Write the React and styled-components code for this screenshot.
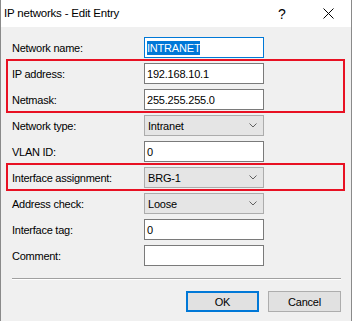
import React from 'react';
import styled, { createGlobalStyle } from 'styled-components'

const Global = createGlobalStyle`
    html, body {
        margin: 0;
        padding: 0;
        background: #f0f0f0;
    }
    body {
        font-family: "Liberation Sans", Arial, sans-serif;
        font-size: 11px;
        color: #000;
    }
`

const Window = styled.div`
    width: 352px;
    height: 321px;
    box-sizing: border-box;
    border-left: 1px solid #8a8a8a;
    border-right: 1px solid #8a8a8a;
    background: #f0f0f0;
    display: flex;
    flex-direction: column;
`

const TitleBar = styled.div`
    height: 27px;
    background: #fff;
    display: flex;
    align-items: center;
    padding-left: 3px;
    flex-shrink: 0;
`

const Title = styled.div`
    flex: 1;
    font-size: 11.5px;
    letter-spacing: -0.2px;
    padding-bottom: 1px;
`

const TitleButton = styled.div`
    width: 46px;
    height: 27px;
    display: flex;
    align-items: center;
    justify-content: center;
    font-size: 14px;
`

const Body = styled.div`
    flex: 1;
    padding: 10px 10px 0 11px;
    display: flex;
    flex-direction: column;
`

const Form = styled.div`
    display: flex;
    flex-direction: column;
    gap: 5px;
`

const Group = styled.div`
    display: flex;
    flex-direction: column;
    gap: 5px;
    margin: -4px -4px -3px -6px;
    padding: 2px 2px 1px 4px;
    border: 2px solid #e81123;
`

const Row = styled.div`
    display: grid;
    grid-template-columns: 132px 120px;
    align-items: center;
    height: 21px;
`

const Label = styled.div`
    letter-spacing: -0.25px;
    white-space: nowrap;
`

const TextBox = styled.div`
    box-sizing: border-box;
    height: 21px;
    border: 1px solid ${p => (p.$focused ? '#0078d7' : '#7a7a7a')};
    background: #fff;
    display: flex;
    align-items: center;
    padding-left: 2px;
    letter-spacing: -0.2px;
`

const Selected = styled.span`
    background: #0078d7;
    color: #fff;
    padding: 1px 0;
`

const Combo = styled.div`
    box-sizing: border-box;
    height: 21px;
    border: 1px solid #acacac;
    background: #e5e5e5;
    display: flex;
    align-items: center;
    justify-content: space-between;
    padding: 0 6px 0 3px;
    letter-spacing: -0.2px;
`

const Separator = styled.div`
    margin-top: 12px;
    height: 1px;
    background: #a0a0a0;
    border-bottom: 1px solid #fff;
`

const Buttons = styled.div`
    display: flex;
    justify-content: flex-end;
    gap: 9px;
    margin-top: 11px;
`

const Button = styled.div`
    box-sizing: border-box;
    width: 73px;
    height: 21px;
    background: #e1e1e1;
    border: ${p => (p.$default ? '2px solid #0078d7' : '1px solid #adadad')};
    display: flex;
    align-items: center;
    justify-content: center;
    letter-spacing: -0.2px;
`

const Chevron = () => (
    <svg width="8" height="5" viewBox="0 0 8 5">
        <path d="M0.5 0.5 L4 4 L7.5 0.5" fill="none" stroke="#606060" strokeWidth="1" />
    </svg>
)

const Close = () => (
    <svg width="11" height="11" viewBox="0 0 11 11">
        <path d="M0.5 0.5 L10.5 10.5 M10.5 0.5 L0.5 10.5" stroke="#000" strokeWidth="1" />
    </svg>
)

const Field = ({ label, children }) => (
    <Row>
        <Label>{label}</Label>
        {children}
    </Row>
)

const Select = ({ value }) => (
    <Combo>
        <span>{value}</span>
        <Chevron />
    </Combo>
)

export default function App() {
    return (
        <Window>
            <Global />
            <TitleBar>
                <Title>IP networks - Edit Entry</Title>
                <TitleButton>?</TitleButton>
                <TitleButton><Close /></TitleButton>
            </TitleBar>
            <Body>
                <Form>
                    <Field label="Network name:">
                        <TextBox $focused><Selected>INTRANET</Selected></TextBox>
                    </Field>
                    <Group>
                        <Field label="IP address:">
                            <TextBox>192.168.10.1</TextBox>
                        </Field>
                        <Field label="Netmask:">
                            <TextBox>255.255.255.0</TextBox>
                        </Field>
                    </Group>
                    <Field label="Network type:">
                        <Select value="Intranet" />
                    </Field>
                    <Field label="VLAN ID:">
                        <TextBox>0</TextBox>
                    </Field>
                    <Group>
                        <Field label="Interface assignment:">
                            <Select value="BRG-1" />
                        </Field>
                    </Group>
                    <Field label="Address check:">
                        <Select value="Loose" />
                    </Field>
                    <Field label="Interface tag:">
                        <TextBox>0</TextBox>
                    </Field>
                    <Field label="Comment:">
                        <TextBox />
                    </Field>
                </Form>
                <Separator />
                <Buttons>
                    <Button $default>OK</Button>
                    <Button>Cancel</Button>
                </Buttons>
            </Body>
        </Window>
    );
}
